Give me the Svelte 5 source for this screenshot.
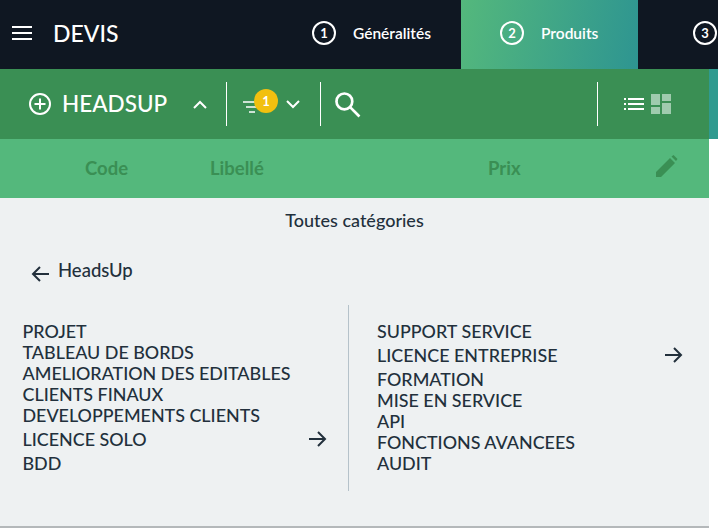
<script>
  const leftItems = ["PROJET", "TABLEAU DE BORDS", "AMELIORATION DES EDITABLES", "CLIENTS FINAUX", "DEVELOPPEMENTS CLIENTS", "LICENCE SOLO", "BDD"];
  const rightItems = ["SUPPORT SERVICE", "LICENCE ENTREPRISE", "FORMATION", "MISE EN SERVICE", "API", "FONCTIONS AVANCEES", "AUDIT"];
  const withArrow = ["LICENCE SOLO", "LICENCE ENTREPRISE"];
</script>

<div class="page">
  <header class="topbar">
    <div class="brand">
      <svg class="burger" viewBox="0 0 20 14" width="20" height="14"><path d="M0 1h20M0 7h20M0 13h20" stroke="#fff" stroke-width="2" /></svg>
      <span class="title">DEVIS</span>
    </div>
    <nav class="steps">
      <div class="step one"><span class="num">1</span><span>Généralités</span></div>
      <div class="step two"><span class="num">2</span><span>Produits</span></div>
      <div class="step three"><span class="num">3</span></div>
    </nav>
  </header>

  <div class="band">
    <div class="main">
      <div class="toolbar">
        <div class="tool-group first">
          <svg viewBox="0 0 24 24" width="24" height="24" fill="none" stroke="#fff" stroke-width="2"><circle cx="12" cy="12" r="10" /><path d="M12 6.500v11M6.500 12h11" /></svg>
          <span class="cat">HEADSUP</span>
          <svg class="chev" viewBox="0 0 14 9" width="14" height="9" fill="none" stroke="#fff" stroke-width="2"><path d="M1 8l6-6 6 6" /></svg>
        </div>
        <div class="tool-group filter">
          <div class="filter-icon">
            <svg viewBox="0 0 18 12" width="18" height="12"><path d="M0 1h18M3 6h12M6 11h6" stroke="#fff" stroke-width="1.600" /></svg>
            <span class="badge">1</span>
          </div>
          <svg class="chev" viewBox="0 0 14 9" width="14" height="9" fill="none" stroke="#fff" stroke-width="2"><path d="M1 1l6 6 6-6" /></svg>
        </div>
        <div class="tool-group search">
          <svg viewBox="0 0 26 26" width="27" height="27" fill="none" stroke="#fff" stroke-width="2.600"><circle cx="10" cy="10" r="7.600" /><path d="M15.500 15.500l9 9" /></svg>
        </div>
        <div class="tool-group views">
          <svg viewBox="0 0 20 12" width="20" height="12" fill="#fff"><path d="M0 0h2v2H0zM4 0h16v2H4zM0 5h2v2H0zM4 5h16v2H4zM0 10h2v2H0zM4 10h16v2H4z" /></svg>
          <svg viewBox="0 0 20 20" width="20" height="20" fill="#9fcbae"><path d="M0 0h9v11H0zM11 0h9v7h-9zM0 13h9v7H0zM11 9h9v11h-9z" /></svg>
        </div>
      </div>

      <div class="columns">
        <span class="col-code">Code</span>
        <span class="col-label">Libellé</span>
        <span class="col-price">Prix</span>
        <svg class="pencil" viewBox="0 0 22 22" width="22" height="22" fill="#3a8f54"><path d="M0 22v-5L14 3l5 5L5 22zM15.500 1.500l2-1.500 4 4-1.500 2z" /></svg>
      </div>
    </div>
    <div class="strip"></div>
  </div>

  <section class="body">
    <h2>Toutes catégories</h2>
    <div class="back">
      <svg viewBox="0 0 18 16" width="18" height="16" fill="none" stroke="#22303c" stroke-width="2"><path d="M18 8H2M9 1L2 8l7 7" /></svg>
      <span>HeadsUp</span>
    </div>
    <div class="lists">
      <ul class="left">
        {#each leftItems as item}
          <li class:active={withArrow.includes(item)}>
            <span>{item}</span>
            {#if withArrow.includes(item)}
              <svg viewBox="0 0 18 16" width="18" height="16" fill="none" stroke="#22303c" stroke-width="2"><path d="M0 8h16M9 1l7 7-7 7" /></svg>
            {/if}
          </li>
        {/each}
      </ul>
      <ul class="right">
        {#each rightItems as item}
          <li class:active={withArrow.includes(item)}>
            <span>{item}</span>
            {#if withArrow.includes(item)}
              <svg viewBox="0 0 18 16" width="18" height="16" fill="none" stroke="#22303c" stroke-width="2"><path d="M0 8h16M9 1l7 7-7 7" /></svg>
            {/if}
          </li>
        {/each}
      </ul>
    </div>
  </section>
</div>

<style>
  :global(body) {
    background: #fff;
  }

  .page {
    width: 718px;
    height: 530px;
    overflow: hidden;
    font-family: Lato, "Noto Sans", sans-serif;
    color: #22303c;
  }

  /* top bar */
  .topbar {
    height: 69px;
    background: #0f1722;
    display: flex;
    justify-content: space-between;
    color: #fff;
  }

  .brand {
    display: flex;
    align-items: center;
    padding: 0 0 4px 12px;
    gap: 21px;
  }

  .title {
    font-size: 23px;
    font-weight: 500;
  }

  .steps {
    display: flex;
    font-size: 15.500px;
    font-weight: 600;
  }

  .step {
    display: flex;
    align-items: center;
    gap: 17px;
    padding-bottom: 3px;
    box-sizing: border-box;
  }

  .step.one {
    width: 149px;
  }

  .step.two {
    width: 177px;
    padding-left: 39px;
    background: linear-gradient(100deg, #54b87c 0%, #2e9591 100%);
  }

  .step.three {
    width: 80px;
    padding-left: 55px;
  }

  .num {
    width: 20px;
    height: 20px;
    flex: none;
    border: 2px solid #fff;
    border-radius: 50%;
    display: flex;
    align-items: center;
    justify-content: center;
    font-size: 13px;
    font-weight: 700;
  }

  /* green band */
  .band {
    display: flex;
  }

  .main {
    width: 709px;
  }

  .strip {
    width: 9px;
    height: 70px;
    background: #2f9a8f;
  }

  .toolbar {
    height: 70px;
    background: #3a8f54;
    display: flex;
    align-items: center;
    color: #fff;
  }

  .tool-group {
    height: 44px;
    display: flex;
    align-items: center;
  }

  .first {
    width: 227px;
    padding-left: 28px;
    box-sizing: border-box;
    border-right: 1.500px solid #fff;
  }

  .cat {
    width: 131px;
    font-size: 22.500px;
    font-weight: 500;
    margin: -2px 0 0 10px;
  }

  .filter {
    width: 94px;
    box-sizing: border-box;
    padding-left: 16px;
    gap: 7px;
    border-right: 1.500px solid #fff;
  }

  .filter-icon {
    position: relative;
    width: 36px;
    display: flex;
    align-items: center;
    padding-top: 6px;
  }

  .badge {
    position: absolute;
    left: 11px;
    top: -6px;
    width: 24px;
    height: 24px;
    border-radius: 50%;
    background: #f2c00f;
    font-size: 13px;
    font-weight: 700;
    display: flex;
    align-items: center;
    justify-content: center;
  }

  .search {
    width: 277px;
    padding-left: 13px;
    box-sizing: border-box;
    border-right: 1.500px solid #fff;
  }

  .views {
    padding-left: 26px;
    gap: 7px;
  }

  .columns {
    height: 59px;
    background: #54b87c;
    display: flex;
    align-items: center;
    color: #3a8f54;
    font-size: 18.500px;
    font-weight: 700;
    padding-bottom: 1px;
    box-sizing: border-box;
  }

  .col-code {
    margin-left: 85px;
    width: 125px;
  }

  .col-label {
    width: 278px;
  }

  .col-price {
    width: 168px;
  }

  .pencil {
    margin-bottom: 4px;
  }

  /* body */
  .body {
    width: 709px;
    height: 330px;
    box-sizing: border-box;
    background: #eef1f2;
    border-bottom: 2px solid #b4b8ba;
    padding-top: 11px;
  }

  h2 {
    margin: 0;
    font-size: 18px;
    font-weight: 500;
    line-height: 23px;
    text-align: center;
  }

  .back {
    display: flex;
    align-items: flex-start;
    gap: 9px;
    margin: 26px 0 0 31px;
    height: 47px;
    font-size: 18.500px;
    font-weight: 500;
    line-height: 24px;
  }

  .back svg {
    margin-top: 8px;
  }

  .lists {
    display: flex;
    height: 186px;
  }

  ul {
    list-style: none;
    margin: 0;
    padding: 15.500px 0 0;
    font-size: 17.900px;
    font-weight: 500;
    line-height: 21px;
    box-sizing: border-box;
  }

  .left {
    width: 349px;
    padding-left: 22.500px;
    padding-right: 21px;
    border-right: 1px solid #b5c2ca;
  }

  .right {
    width: 334px;
    padding-left: 28px;
  }

  li {
    display: flex;
    justify-content: space-between;
    align-items: center;
  }

  li.active {
    height: 27px;
  }
</style>
